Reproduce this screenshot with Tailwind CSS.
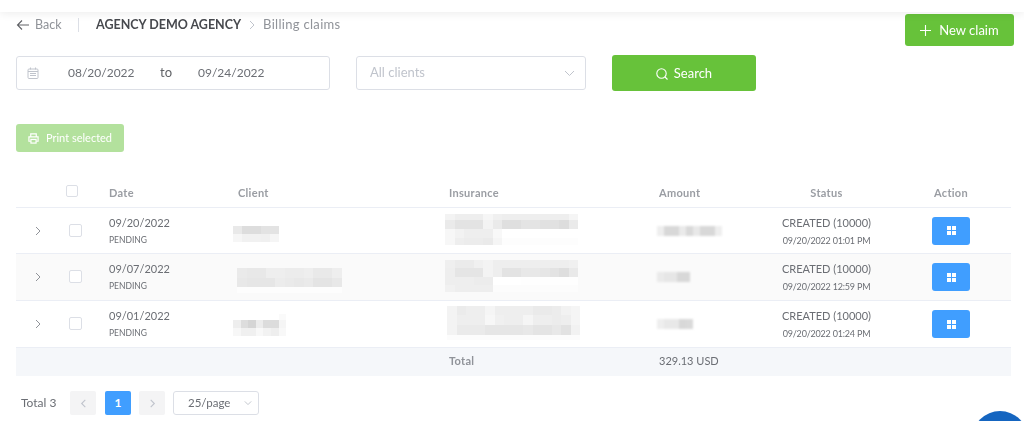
<!DOCTYPE html>
<html lang="en">
<head>
    <meta charset="UTF-8">
    <meta name="viewport" content="width=device-width, initial-scale=1.0">
    <title>Billing claims</title>
    <script src="https://cdn.jsdelivr.net/npm/@tailwindcss/browser@4"></script>
</head>
<body class="bg-white font-['Lato','Noto_Sans',sans-serif] text-[#6b6e74]">
<div class="h-[421px] overflow-hidden relative blur-[0.3px]">
    <!-- top strip -->
    <div class="h-3 bg-white relative shadow-[0_2px_8px_rgba(0,0,0,0.07)]"></div>

    <main class="pl-4 pr-[10px]">
        <!-- breadcrumb row -->
        <div class="flex justify-between items-start pt-[2px]">
            <div class="flex items-center h-5 text-[12.5px] mt-[1px]">
                <svg class="w-[14px] h-[14px] mr-[5px] text-[#606266]" viewBox="0 0 14 14" fill="none" stroke="currentColor" stroke-width="1.1"><path d="M13 7H1.5M6 2.5 1.5 7 6 11.5"/></svg>
                <span class="w-[26px] text-[#909399]">Back</span>
                <span class="w-px h-[14px] bg-[#dcdfe6] ml-[17px] mr-[17px]"></span>
                <span class="font-bold text-[#47494e]">AGENCY DEMO AGENCY</span>
                <svg class="w-[10px] h-[10px] ml-[6px] mr-[6px] text-[#c0c4cc]" viewBox="0 0 10 10" fill="none" stroke="currentColor" stroke-width="1"><path d="M3 1l4 4-4 4"/></svg>
                <span class="text-[13px] text-[#909399] tracking-[0.3px]">Billing claims</span>
            </div>
            <button class="w-[109px] h-8 bg-[#67c23a] rounded-[3px] text-white text-[13px] pt-[1px] flex items-center justify-center gap-[8px]">
                <svg class="w-[11px] h-[11px]" viewBox="0 0 11 11" fill="none" stroke="currentColor" stroke-width="1.1"><path d="M5.5 0v11M0 5.5h11"/></svg>
                New claim
            </button>
        </div>

        <!-- filters -->
        <div class="flex items-center gap-[26px] mt-[9px] h-9">
            <div class="w-[314px] h-[34px] border border-[#dcdfe6] rounded-[3px] flex items-center text-[12px]">
                <svg class="w-3 h-3 ml-[10px] text-[#c0c4cc]" viewBox="0 0 12 12" fill="none" stroke="currentColor" stroke-width="1"><rect x="1" y="2" width="10" height="9.5" rx="1"/><path d="M1 4.5h10M3.5 .5v2M8.5 .5v2M3 6.5h6M3 8.5h6"/></svg>
                <span class="ml-[29px] w-[92px]">08/20/2022</span>
                <span class="w-[38px] text-[#606266] text-[13px]">to</span>
                <span>09/24/2022</span>
            </div>
            <div class="w-[230px] h-[34px] border border-[#dcdfe6] rounded-[3px] flex items-center justify-between px-[13px] text-[13px] text-[#c0c4cc]">
                <span>All clients</span>
                <svg class="w-[11px] h-[11px] mr-[-3px]" viewBox="0 0 11 11" fill="none" stroke="currentColor" stroke-width="1"><path d="M1 3l4.5 4.5L10 3"/></svg>
            </div>
            <button class="w-[144px] h-9 bg-[#67c23a] rounded-[3px] text-white text-[13px] pt-[1px] flex items-center justify-center gap-[6px]">
                <svg class="w-3 h-3" viewBox="0 0 12 12" fill="none" stroke="currentColor" stroke-width="1.1"><circle cx="5.5" cy="5.5" r="4.7"/><path d="M9 9l2.5 2.5"/></svg>
                Search
            </button>
        </div>

        <button class="w-[108px] h-7 mt-[33px] bg-[#b3e19d] rounded-[3px] text-white text-[11px] flex items-center justify-center gap-[7px]">
            <svg class="w-[11px] h-[11px]" viewBox="0 0 12 12" fill="none" stroke="currentColor" stroke-width="1.3"><path d="M3 4V1h6v3M3 9H1V4.2h10V9H9"/><rect x="3.2" y="7" width="5.6" height="4"/></svg>
            Print selected
        </button>

        <!-- table -->
        <div class="mt-[26px] w-[995px] text-[11px]">
            <div class="grid grid-cols-[43px_50px_129px_211px_210px_100px_135px_117px] h-[30px] items-center border-b border-[#ebeef5] font-bold text-[#9a9da3] tracking-[0.3px]">
                <div></div>
                <div><span class="block w-3 h-3 ml-[7px] border border-[#dcdfe6] rounded-[2px] mt-[-3px]"></span></div>
                <div class="pt-[2px]">Date</div>
                <div class="pt-[2px]">Client</div>
                <div class="pt-[2px]">Insurance</div>
                <div class="pt-[2px]">Amount</div>
                <div class="pt-[2px] text-center">Status</div>
                <div class="pt-[2px] text-center pr-[3px]">Action</div>
            </div>

            <div class="grid grid-cols-[43px_50px_129px_211px_210px_100px_135px_117px] h-[46px] items-center border-b border-[#ebeef5]">
                <div class="flex justify-center"><svg class="w-[10px] h-[10px] text-[#909399]" viewBox="0 0 10 10" fill="none" stroke="currentColor" stroke-width="1"><path d="M3 1l4 4-4 4"/></svg></div>
                <div><span class="block w-[13px] h-[13px] ml-[10px] border border-[#dcdfe6] rounded-[2px] bg-white mt-[-1px]"></span></div>
                <div class="leading-none"><div>09/20/2022</div><div class="text-[8.5px] mt-[8px]">PENDING</div></div>
                <div class="h-full relative"><div data-mosaic="client1"></div></div>
                <div class="h-full relative"><div data-mosaic="ins1"></div></div>
                <div class="h-full relative"><div class="blur-[1px]" data-mosaic="amt1"></div></div>
                <div class="text-center leading-none"><div>CREATED (10000)</div><div class="text-[9px] tracking-[-0.2px] mt-[8px]">09/20/2022 01:01 PM</div></div>
                <div class="flex justify-center pr-[3px]"><button class="w-[38px] h-7 bg-[#409eff] rounded-[3px] flex items-center justify-center"><svg class="w-[9px] h-[9px] fill-white" viewBox="0 0 9 9"><rect width="4" height="4"/><rect x="5" width="4" height="4"/><rect y="5" width="4" height="4"/><rect x="5" y="5" width="4" height="4"/></svg></button></div>
            </div>

            <div class="grid grid-cols-[43px_50px_129px_211px_210px_100px_135px_117px] h-[47px] items-center border-b border-[#ebeef5] bg-[#fafafa]">
                <div class="flex justify-center"><svg class="w-[10px] h-[10px] text-[#909399]" viewBox="0 0 10 10" fill="none" stroke="currentColor" stroke-width="1"><path d="M3 1l4 4-4 4"/></svg></div>
                <div><span class="block w-[13px] h-[13px] ml-[10px] border border-[#dcdfe6] rounded-[2px] bg-white mt-[-1px]"></span></div>
                <div class="leading-none"><div>09/07/2022</div><div class="text-[8.5px] mt-[8px]">PENDING</div></div>
                <div class="h-full relative"><div data-mosaic="client2"></div></div>
                <div class="h-full relative"><div data-mosaic="ins2"></div></div>
                <div class="h-full relative"><div class="blur-[1px]" data-mosaic="amt2"></div></div>
                <div class="text-center leading-none"><div>CREATED (10000)</div><div class="text-[9px] tracking-[-0.2px] mt-[8px]">09/20/2022 12:59 PM</div></div>
                <div class="flex justify-center pr-[3px]"><button class="w-[38px] h-7 bg-[#409eff] rounded-[3px] flex items-center justify-center"><svg class="w-[9px] h-[9px] fill-white" viewBox="0 0 9 9"><rect width="4" height="4"/><rect x="5" width="4" height="4"/><rect y="5" width="4" height="4"/><rect x="5" y="5" width="4" height="4"/></svg></button></div>
            </div>

            <div class="grid grid-cols-[43px_50px_129px_211px_210px_100px_135px_117px] h-[47px] items-center border-b border-[#ebeef5]">
                <div class="flex justify-center"><svg class="w-[10px] h-[10px] text-[#909399]" viewBox="0 0 10 10" fill="none" stroke="currentColor" stroke-width="1"><path d="M3 1l4 4-4 4"/></svg></div>
                <div><span class="block w-[13px] h-[13px] ml-[10px] border border-[#dcdfe6] rounded-[2px] bg-white mt-[-1px]"></span></div>
                <div class="leading-none"><div>09/01/2022</div><div class="text-[8.5px] mt-[8px]">PENDING</div></div>
                <div class="h-full relative"><div data-mosaic="client3"></div></div>
                <div class="h-full relative"><div data-mosaic="ins3"></div></div>
                <div class="h-full relative"><div class="blur-[1px]" data-mosaic="amt3"></div></div>
                <div class="text-center leading-none"><div>CREATED (10000)</div><div class="text-[9px] tracking-[-0.2px] mt-[8px]">09/20/2022 01:24 PM</div></div>
                <div class="flex justify-center pr-[3px]"><button class="w-[38px] h-7 bg-[#409eff] rounded-[3px] flex items-center justify-center"><svg class="w-[9px] h-[9px] fill-white" viewBox="0 0 9 9"><rect width="4" height="4"/><rect x="5" width="4" height="4"/><rect y="5" width="4" height="4"/><rect x="5" y="5" width="4" height="4"/></svg></button></div>
            </div>

            <div class="grid grid-cols-[433px_210px_1fr] h-7 pb-[1px] items-center bg-[#f5f7fa]">
                <div></div>
                <div class="font-bold text-[#909399] tracking-[0.3px]">Total</div>
                <div>329.13 USD</div>
            </div>
        </div>

        <!-- pagination -->
        <div class="flex items-center h-6 mt-[15px] text-[12px]">
            <span class="ml-[5px] w-[49px]">Total 3</span>
            <span class="w-[26px] h-6 bg-[#f4f4f5] rounded-[2px] flex items-center justify-center"><svg class="w-[9px] h-[9px] text-[#c0c4cc]" viewBox="0 0 10 10" fill="none" stroke="currentColor" stroke-width="1.2"><path d="M7 1L3 5l4 4"/></svg></span>
            <span class="w-[26px] h-6 ml-[9px] bg-[#409eff] rounded-[2px] text-white font-bold flex items-center justify-center">1</span>
            <span class="w-[26px] h-6 ml-[8px] bg-[#f4f4f5] rounded-[2px] flex items-center justify-center"><svg class="w-[9px] h-[9px] text-[#c0c4cc]" viewBox="0 0 10 10" fill="none" stroke="currentColor" stroke-width="1.2"><path d="M3 1l4 4-4 4"/></svg></span>
            <span class="w-[86px] h-6 ml-2 border border-[#dcdfe6] rounded-[3px] flex items-center pl-[14px] text-[11.5px]">25/page<svg class="w-[8px] h-[8px] ml-[14px] text-[#c0c4cc]" viewBox="0 0 10 10" fill="none" stroke="currentColor" stroke-width="1.2"><path d="M1 3l4 4 4-4"/></svg></span>
        </div>
    </main>

    <!-- chat bubble, cut off by the window edge -->
    <div class="absolute left-[972px] top-[411px] w-[56px] h-[56px] rounded-full bg-[#1565c0]"></div>
</div>

    <script>
        // redacted cells from the screenshot: offset within the cell, cell size, grey levels per row
        const MOSAICS = {
            client1: { x: -5, y: 18, w: 9.3, rows: [[8, 'e9 dd dd e3 e3'], [8, 'f6 f1 f1 f0 f5']] },
            client2: { x: -1, y: 14, w: 9.5, rows: [[10, 'ea e8 e8 ee ee ec ec ee e9 e9 ee'], [9, 'e8 e6 e6 e6 ec ea e8 ea e4 e4 e8'], [6, 'fd fd fd fd fd fd fd fd fd fd fd']] },
            client3: { x: -5, y: 13, w: 7.6, rows: [[6, 'ff ff ff ff ff ff fa'], [8, 'ee dd d5 ec dc dc f5'], [8, 'f7 f0 f0 f8 f2 ee f8']] },
            ins1: { x: -4, y: 6, w: 9.5, rows: [[6, 'f3 ee ee ee f6 f0 ee ee ee ee ee ee ee f5'], [9, 'ea e3 e3 e3 f3 ea df df e4 e4 e1 e1 dd ea'], [9, 'f7 f2 ee ee ee f8 ff ff ff ff ff ff ff ff'], [7, 'f7 ee ec ec ea f5 fd fd fd fd fd fd fd fd']] },
            ins2: { x: -4, y: 6, w: 9.5, rows: [[8, 'ef eb eb f0 f3 ee ee ee ee ee ee ee ee f0'], [9, 'ee e5 e5 e5 f3 ee e3 e3 e8 e8 e6 e3 de e9'], [8, 'ee ee ee ec ec ff ff ff fe fe fe fe fe fe'], [7, 'f1 ee ee ee ee fc fc fc fc fc fc fc fc fc']] },
            ins3: { x: -2, y: 5, w: 9.5, rows: [[9, 'f3 eb ee ee f5 ee ee ee ee ea ea ec f2 f5'], [10, 'f3 ee ee ee f7 f0 ee ee f5 ee ee ec ee f5'], [10, 'f3 ea ea ea e6 e6 e6 e6 e8 e4 e4 e8 e2 f2'], [5, 'fc fc fc fc fc fc fc fc fc fc fc fc fc fc']] },
            amt1: { x: -2, y: 18, w: 7.2, rows: [[10, 'ee d8 d8 ea d9 e8 d8 d8 ee']] },
            amt2: { x: -2, y: 18, w: 6.6, rows: [[10, 'ea e6 e6 d8 d8']] },
            amt3: { x: -2, y: 18, w: 7.2, rows: [[10, 'ee e8 e8 d8 da']] }
        };

        document.querySelectorAll('[data-mosaic]').forEach(el => {
            const m = MOSAICS[el.dataset.mosaic];
            el.style.marginLeft = m.x + 'px';
            el.style.paddingTop = m.y + 'px';
            el.innerHTML = m.rows.map(([h, greys]) =>
                '<div style="display:flex;height:' + h + 'px">' +
                greys.split(' ').map(g => '<span style="flex:none;width:' + m.w + 'px;background:#' + g + g + g + '"></span>').join('') +
                '</div>'
            ).join('');
        });
    </script>
</body>
</html>
